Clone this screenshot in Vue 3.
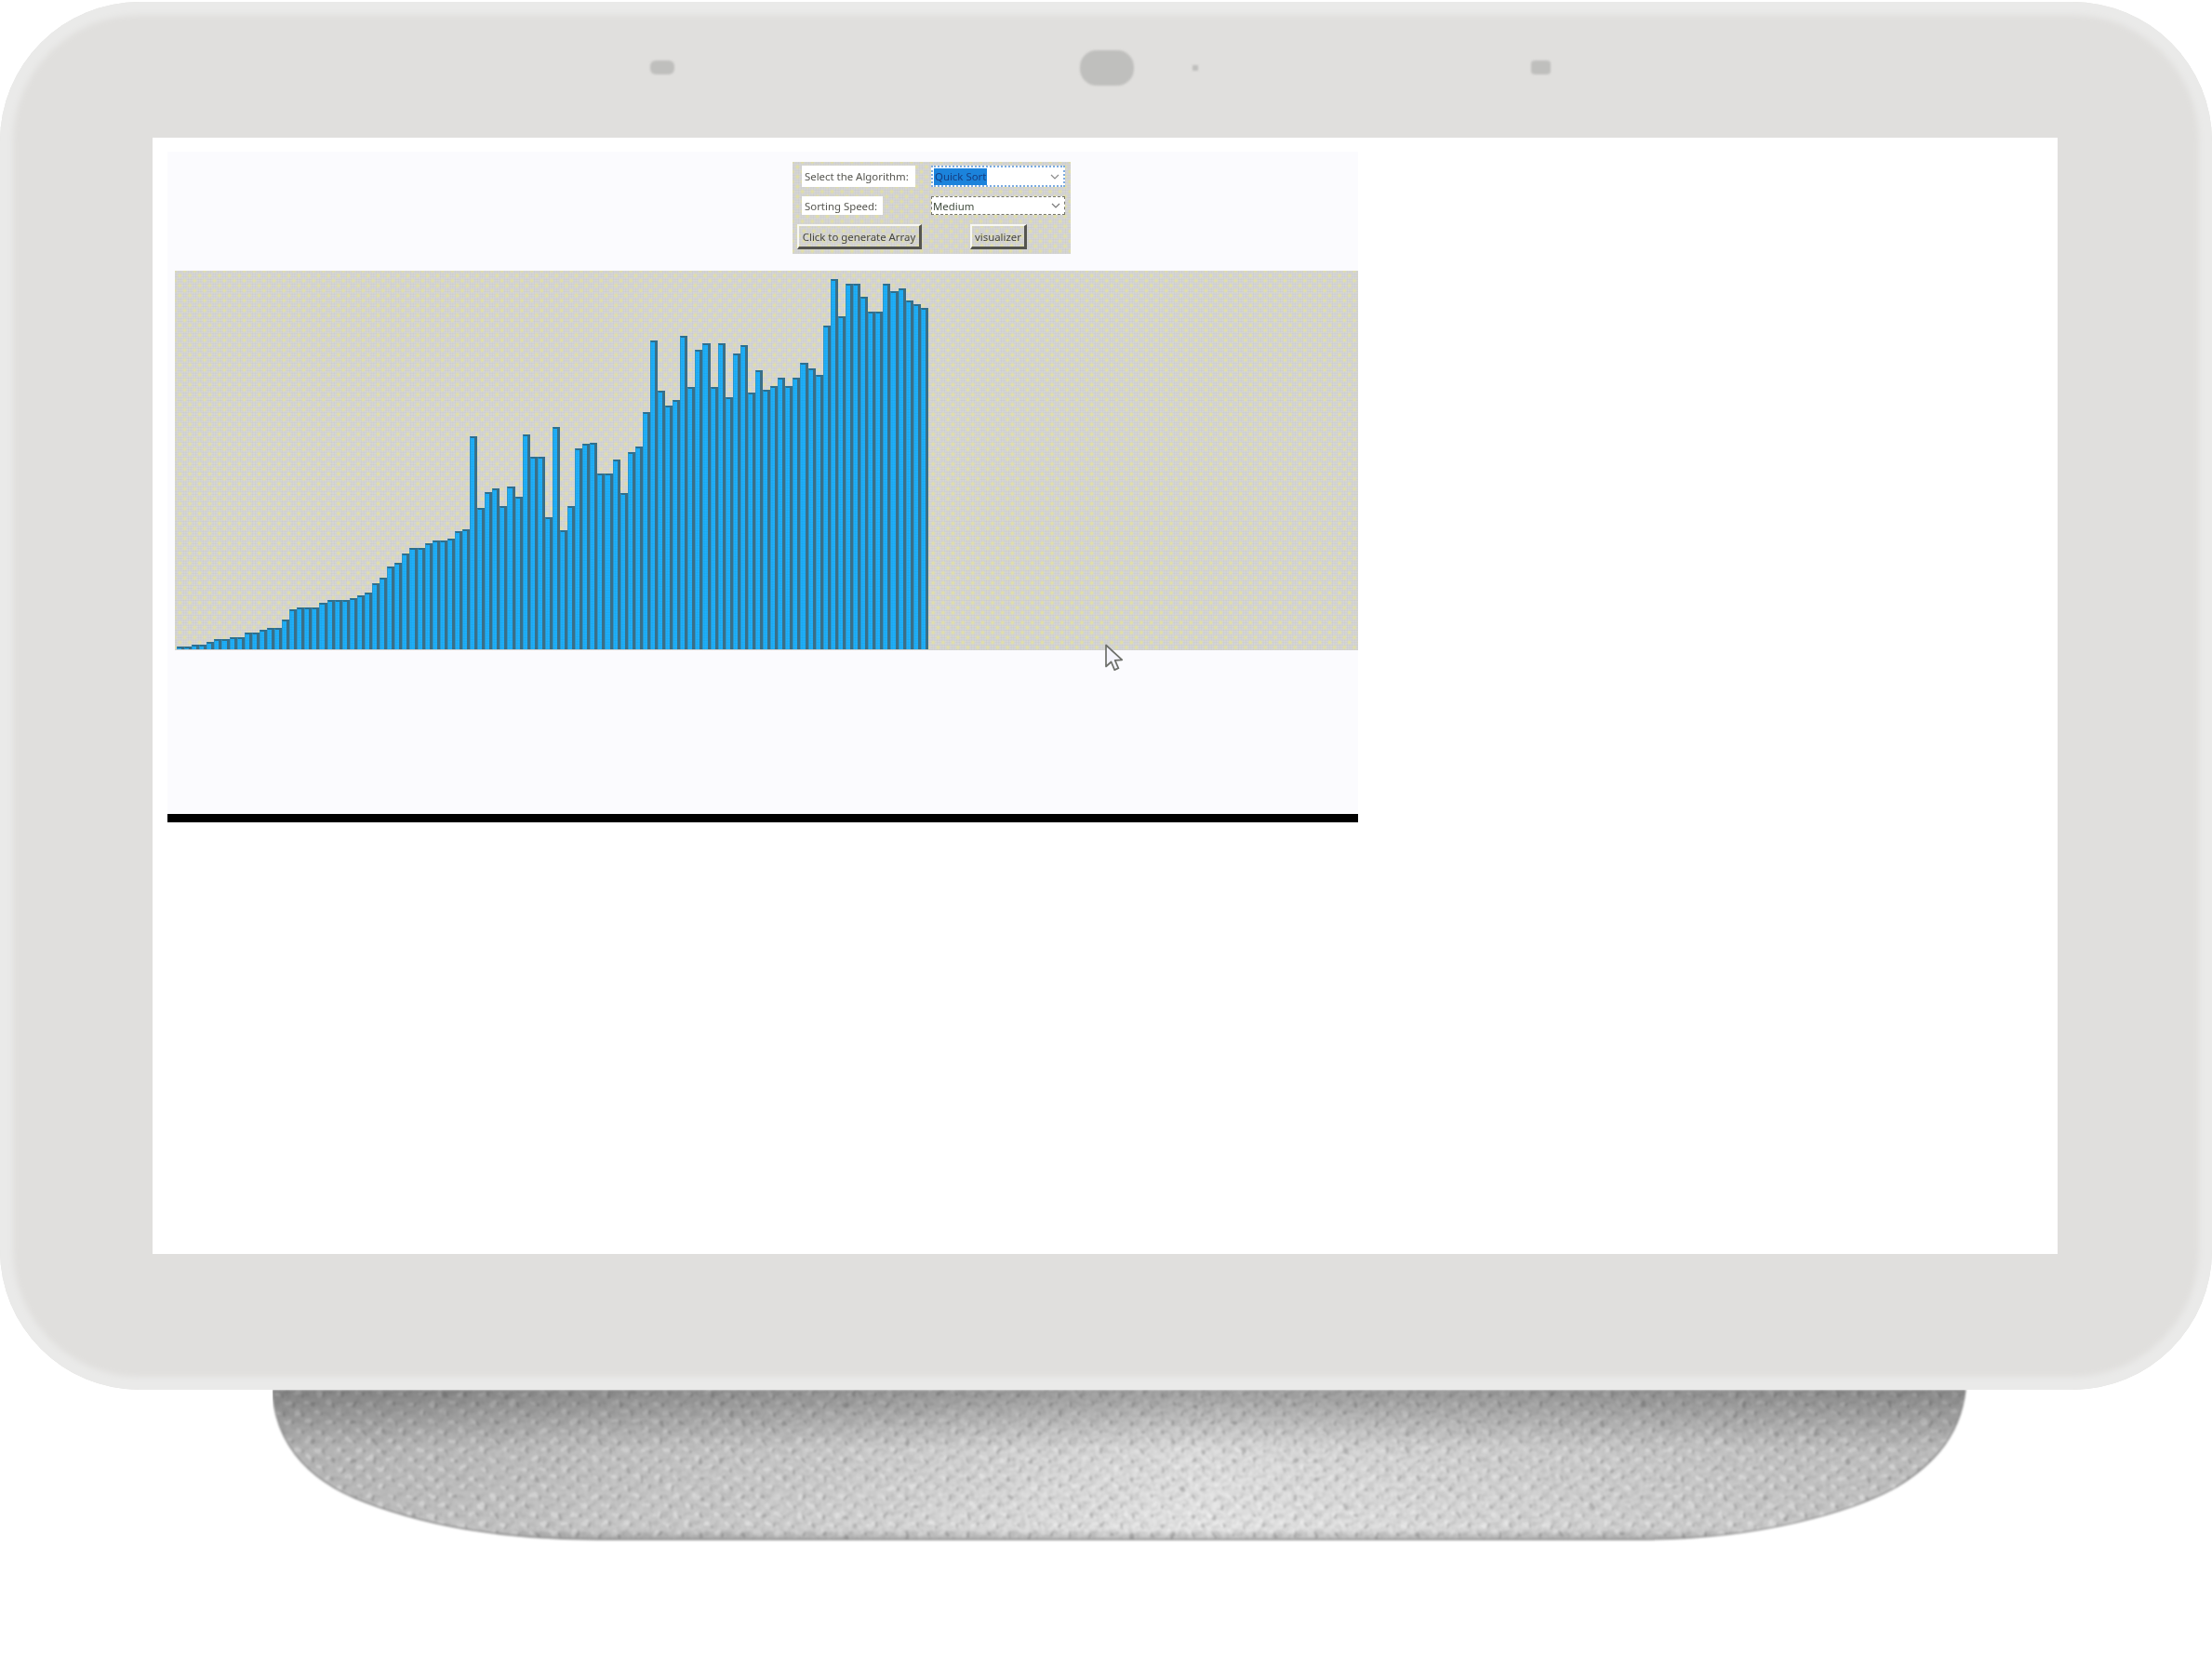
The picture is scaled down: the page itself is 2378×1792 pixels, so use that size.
<template>
  <div class="scene">
    <div class="device">
      <div class="sensors">
        <span class="sensor mic-left"></span>
        <span class="sensor camera"></span>
        <span class="sensor led"></span>
        <span class="sensor mic-right"></span>
      </div>

      <div class="screen">
        <div class="page">
          <div class="controls dither">
            <span class="label label-algo">Select the Algorithm:</span>
            <div class="select select-active">
              <span class="selected-text">Quick Sort</span>
              <svg class="chevron" width="10" height="6" viewBox="0 0 10 6">
                <path d="M1 1l4 4 4-4" fill="none" stroke="#8b8b8b" stroke-width="1.2" />
              </svg>
            </div>
            <span class="label label-speed">Sorting Speed:</span>
            <div class="select select-idle">
              <span>Medium</span>
              <svg class="chevron" width="10" height="6" viewBox="0 0 10 6">
                <path d="M1 1l4 4 4-4" fill="none" stroke="#777" stroke-width="1.2" />
              </svg>
            </div>
            <button class="btn btn-generate dither">Click to generate Array</button>
            <button class="btn btn-visual dither">visualizer</button>
          </div>

          <div class="chart dither">
            <div class="bars">
              <div
                v-for="(h, i) in barHeights"
                :key="i"
                class="bar"
                :style="{ height: h + 'px' }"
              ></div>
            </div>
          </div>

          <svg class="cursor" width="22" height="32" viewBox="0 0 22 32">
            <path
              d="M2 1.5v23l5.6-5 3.6 8.6 4.2-1.8-3.7-8.4 7.6-.6z"
              fill="#f4f4fb"
              stroke="#6d6f6a"
              stroke-width="1.7"
              stroke-linejoin="round"
            />
          </svg>
        </div>
      </div>
    </div>

    <svg class="stand" width="1824" height="166" viewBox="0 0 1824 166">
      <defs>
        <clipPath id="standClip">
          <path d="M0 0C2 50 30 95 100 121C150 140 230 161 350 161L1470 161C1600 161 1700 130 1745 105C1790 78 1815 45 1820 0Z" />
        </clipPath>
        <linearGradient id="standSides" x1="0" x2="1" y1="0" y2="0">
          <stop offset="0" stop-color="#bcbcbc" />
          <stop offset="0.3" stop-color="#d0d0d0" />
          <stop offset="0.55" stop-color="#e8e8e8" />
          <stop offset="0.78" stop-color="#d4d4d4" />
          <stop offset="1" stop-color="#c2c2c2" />
        </linearGradient>
        <linearGradient id="standShade" x1="0" x2="0" y1="0" y2="1">
          <stop offset="0" stop-color="#000" stop-opacity="0.3" />
          <stop offset="0.4" stop-color="#000" stop-opacity="0.04" />
          <stop offset="0.93" stop-color="#000" stop-opacity="0" />
          <stop offset="1" stop-color="#000" stop-opacity="0.18" />
        </linearGradient>
        <pattern id="weave" width="22" height="20" patternUnits="userSpaceOnUse">
          <ellipse cx="5" cy="4" rx="3.4" ry="2.6" fill="#fff" fill-opacity="0.35" />
          <ellipse cx="16" cy="14" rx="3.4" ry="2.6" fill="#fff" fill-opacity="0.35" />
          <ellipse cx="10.5" cy="6" rx="1.4" ry="2.8" fill="#555" fill-opacity="0.3" />
          <ellipse cx="21.5" cy="16" rx="1.4" ry="2.8" fill="#555" fill-opacity="0.3" />
          <ellipse cx="0" cy="16" rx="1.4" ry="2.8" fill="#555" fill-opacity="0.3" />
          <ellipse cx="15" cy="4" rx="3" ry="2.2" fill="#777" fill-opacity="0.12" />
          <ellipse cx="5" cy="14" rx="3" ry="2.2" fill="#777" fill-opacity="0.12" />
        </pattern>
        <filter id="warp" x="0" y="0" width="100%" height="100%">
          <feTurbulence type="fractalNoise" baseFrequency="0.09" numOctaves="2" seed="7" result="n" />
          <feDisplacementMap in="SourceGraphic" in2="n" scale="9" xChannelSelector="R" yChannelSelector="G" />
          <feGaussianBlur stdDeviation="0.7" />
        </filter>
        <filter id="grain" x="0" y="0" width="100%" height="100%">
          <feTurbulence type="fractalNoise" baseFrequency="0.2" numOctaves="2" seed="4" />
          <feColorMatrix values="0 0 0 0 0.35  0 0 0 0 0.35  0 0 0 0 0.35  1.8 0 0 0 -0.7" />
        </filter>
        <filter id="soft" x="-1%" y="-3%" width="102%" height="106%">
          <feGaussianBlur stdDeviation="0.8" />
        </filter>
      </defs>
      <g filter="url(#soft)">
        <g clip-path="url(#standClip)">
          <rect width="1824" height="166" fill="url(#standSides)" />
          <rect width="1824" height="166" fill="url(#weave)" filter="url(#warp)" />
          <rect width="1824" height="166" filter="url(#grain)" opacity="0.4" />
          <rect width="1824" height="161" fill="url(#standShade)" />
        </g>
        <path
          d="M0 0C2 50 30 95 100 121C150 140 230 161 350 161L1470 161C1600 161 1700 130 1745 105C1790 78 1815 45 1820 0"
          fill="none"
          stroke="#8d8d8d"
          stroke-width="1.4"
        />
      </g>
    </svg>
  </div>
</template>

<script setup>
// top edge of each bar, read off the 3x crops (baseline sits at 1285)
const barTops = [
  1275, 1275, 1270, 1270, 1262, 1253, 1253, 1245, 1245, 1230,
  1230, 1222, 1215, 1215, 1190, 1157, 1150, 1150, 1150, 1135,
  1127, 1127, 1127, 1120, 1112, 1103, 1072, 1055, 1018, 1005,
  975, 958, 958, 942, 935, 935, 928, 905, 897, 598,
  830, 777, 767, 823, 760, 792, 592, 663, 663, 860,
  568, 902, 823, 638, 623, 618, 718, 718, 672, 782,
  648, 632, 520, 290, 450, 498, 480, 275, 440, 320,
  298, 440, 298, 473, 330, 305, 458, 385, 448, 435,
  408, 435, 410, 360, 380, 400, 240, 90, 210, 105,
  105, 147, 195, 195, 105, 130, 120, 160, 172, 185,
]

const barHeights = barTops.map((top) => (1285 - top) / 3)
</script>

<style scoped>
.scene {
  width: 2378px;
  height: 1792px;
  background: #fff;
  overflow: hidden;
  padding-top: 2px;
  box-sizing: border-box;
  font-family: "Noto Sans", "Open Sans", sans-serif;
}

.device {
  height: 1492px;
  box-sizing: border-box;
  background: #e0dfdd;
  border-radius: 150px;
  box-shadow: inset 0 0 6px 14px #eaeae9;
  display: flex;
  flex-direction: column;
}

.sensors {
  height: 146px;
  flex-shrink: 0;
  box-sizing: border-box;
  padding: 0 0 5px 699px;
  display: flex;
  align-items: center;
}

.sensor {
  display: block;
  background: #bfbfbd;
  filter: blur(0.8px);
}

.mic-left {
  width: 26px;
  height: 15px;
  border-radius: 6px;
}

.camera {
  width: 58px;
  height: 38px;
  border-radius: 18px;
  margin-left: 436px;
}

.led {
  width: 6px;
  height: 6px;
  margin-left: 63px;
}

.mic-right {
  width: 21px;
  height: 15px;
  border-radius: 4px;
  margin-left: 358px;
}

.screen {
  height: 1200px;
  margin: 0 166px 0 164px;
  background: #fff;
  padding: 15px 0 0 16px;
  box-sizing: border-box;
}

.page {
  position: relative;
  width: 1280px;
  height: 721px;
  box-sizing: border-box;
  padding-top: 11px;
  background: #fbfbfe;
  border-bottom: 9px solid #000;
}

.dither {
  background-color: #d6d6d6;
  background-image:
    radial-gradient(circle, #e0dea8 0, #e0dea8 1.2px, transparent 2.6px),
    radial-gradient(circle, #e0dea8 0, #e0dea8 1.2px, transparent 2.6px),
    radial-gradient(circle, #cccccc 0, #cccccc 0.7px, transparent 1.2px);
  background-size: 10.67px 10.67px, 10.67px 10.67px, 2.67px 2.67px;
  background-position: 0 0, 5.33px 5.33px, 0 0;
}

.controls {
  width: 299px;
  height: 99px;
  box-sizing: border-box;
  margin-left: 672px;
  padding-top: 4px;
  display: grid;
  grid-template-columns: 149px 144px;
  grid-template-rows: 23px 20px 27px;
  row-gap: 10px;
  font-size: 11.4px;
  color: #55554f;
  filter: blur(0.7px);
}

.label {
  background: #fff;
  justify-self: start;
  margin-left: 10px;
  line-height: 20px;
  padding: 0 3px;
  white-space: nowrap;
  box-sizing: border-box;
}

.label-algo {
  width: 122px;
  height: 23px;
  line-height: 24px;
}

.label-speed {
  width: 87px;
  height: 20px;
  line-height: 21px;
}

.select {
  background: #fff;
  display: flex;
  align-items: center;
  justify-content: space-between;
  padding: 0 4px 0 1px;
  box-sizing: border-box;
}

.select-active {
  border: 2px dotted #7cabe0;
  color: #163d80;
}

.select-idle {
  border: 1px dashed #77776c;
  color: #3f4a3c;
}

.selected-text {
  background: #1b83dc;
  padding: 0 1px;
  line-height: 18px;
  width: 57px;
  box-sizing: border-box;
  white-space: nowrap;
}

.chevron {
  flex-shrink: 0;
}

.btn {
  height: 27px;
  margin: 0;
  padding: 0;
  font-family: inherit;
  font-size: 11.4px;
  color: #45453f;
  white-space: nowrap;
  border-style: solid;
  border-width: 2px 3px 3px 2px;
  border-color: #f7f7f2 #55554f #55554f #f7f7f2;
}

.btn-generate {
  width: 134px;
  margin-left: 5px;
}

.btn-visual {
  width: 61px;
  margin-left: 42px;
}

.chart {
  height: 408px;
  margin: 18px 0 0 8px;
  padding: 0 0 1px 2px;
  box-sizing: border-box;
  display: flex;
  align-items: flex-end;
}

.bars {
  width: 808.5px;
  height: 100%;
  display: flex;
  align-items: flex-end;
  filter: blur(0.6px);
}

.bar {
  flex: 1;
  box-sizing: border-box;
  background-color: #1eb0fb;
  background-image: radial-gradient(circle, rgba(15, 100, 140, 0.16) 0, rgba(15, 100, 140, 0.16) 0.7px, transparent 1.1px);
  background-size: 2.67px 2.67px;
  border-top: 2.5px solid #2c6f8f;
  border-left: 1px solid #2a96cc;
  border-right: 3px solid #3a6f88;
}

.cursor {
  position: absolute;
  left: 1007px;
  top: 529px;
  filter: blur(0.5px);
}

.stand {
  display: block;
  margin-left: 293px;
}
</style>

<style>
html,
body {
  background: #fff;
}
</style>
